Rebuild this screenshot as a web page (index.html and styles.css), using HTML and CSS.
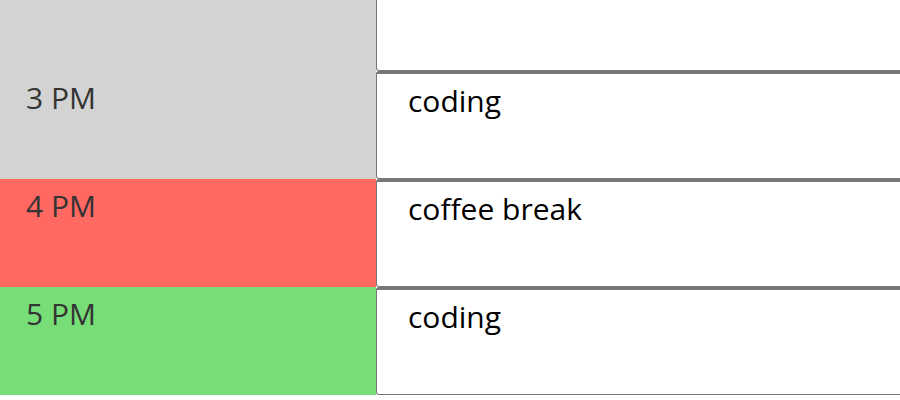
FILE: index.html
```html
<!DOCTYPE html>
<html lang="en">
<head>
    <meta charset="UTF-8">
    <meta name="viewport" content="width=device-width, initial-scale=1.0">
    <title>Work Day Scheduler</title>
    <link rel="stylesheet" href="styles.css">
</head>
<body>
    <div class="planner">
        <div class="row">
            <div class="hour past"></div>
            <textarea class="description"></textarea>
        </div>
        <div class="row">
            <div class="hour past">3 PM</div>
            <textarea class="description">coding</textarea>
        </div>
        <div class="row">
            <div class="hour present">4 PM</div>
            <textarea class="description">coffee break</textarea>
        </div>
        <div class="row">
            <div class="hour future">5 PM</div>
            <textarea class="description">coding</textarea>
        </div>
    </div>
</body>
</html>
```

FILE: styles.css
```css
body{
    margin: 0;
    overflow: hidden;
    font-family: "Open Sans", "Noto Sans", sans-serif;
}
.planner{
    margin-top: -37px;
}
.row{
    display: flex;
    height: 108px;
}
.hour{
    width: 376px;
    flex-shrink: 0;
    box-sizing: border-box;
    padding: 6px 0 0 26px;
    font-size: 30px;
    color: #333;
}
.description{
    flex: 1;
    min-width: 600px;
    box-sizing: border-box;
    height: 108px;
    margin: 0;
    padding: 6px 31px;
    border: 1px solid #777;
    border-top-width: 3px;
    border-radius: 3px;
    resize: none;
    font-family: "Open Sans", "Noto Sans", sans-serif;
    font-size: 30px;
    color: #000;
    background: #fff;
}
.past{
    background-color: #d3d3d3;
}
.present{
    background-color: #ff6961;
}
.future{
    background-color: #77dd77;
}
```
